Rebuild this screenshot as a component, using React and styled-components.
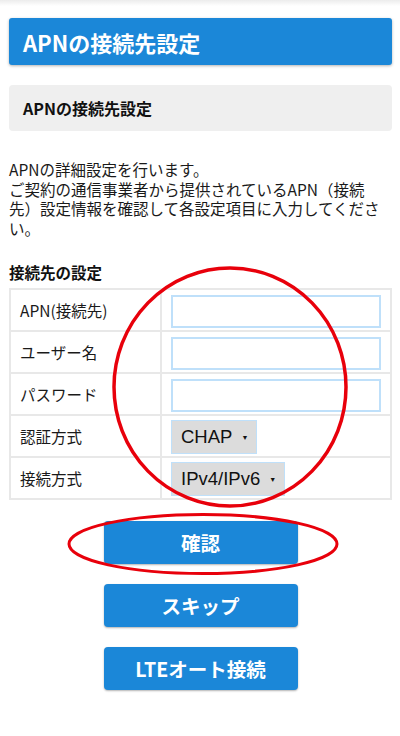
import React from 'react'
import styled, { createGlobalStyle } from 'styled-components'

const GlobalStyle = createGlobalStyle`
  html, body {
    margin: 0;
    padding: 0;
    background: #fff;
  }
  body {
    font-family: "Noto Sans CJK JP", "Noto Sans", sans-serif;
    color: #111;
  }
`

const fields = [
  { label: 'APN(接続先)', type: 'input' },
  { label: 'ユーザー名', type: 'input' },
  { label: 'パスワード', type: 'input' },
  { label: '認証方式', type: 'select', value: 'CHAP' },
  { label: '接続方式', type: 'select', value: 'IPv4/IPv6' },
]

const App = () => {
  return (
    <Page>
      <GlobalStyle />
      <TopShade />
      <Content>
        <Header>APNの接続先設定</Header>
        <SubHeader>APNの接続先設定</SubHeader>
        <Intro>
          <span>APNの詳細設定を行います。</span>
          <span>ご契約の通信事業者から提供されているAPN（接続先）設定情報を確認して各設定項目に入力してください。</span>
        </Intro>
        <SectionTitle>接続先の設定</SectionTitle>
        <Table>
          <tbody>
            {fields.map((f) => (
              <tr key={f.label}>
                <LabelCell>{f.label}</LabelCell>
                <FieldCell>
                  {f.type === 'input' ? (
                    <TextInput type="text" />
                  ) : (
                    <SelectBox>
                      <span>{f.value}</span>
                      <Caret>▼</Caret>
                    </SelectBox>
                  )}
                </FieldCell>
              </tr>
            ))}
          </tbody>
        </Table>
        <Buttons>
          <Button>確認</Button>
          <Button>スキップ</Button>
          <Button>LTEオート接続</Button>
        </Buttons>
      </Content>
      <Marks width="400" height="736" viewBox="0 0 400 736">
        <ellipse cx="230" cy="387" rx="116" ry="119" fill="none" stroke="#e8000b" strokeWidth="3.5" />
        <ellipse cx="203" cy="544" rx="134" ry="29.5" fill="none" stroke="#e8000b" strokeWidth="3" />
      </Marks>
    </Page>
  )
}

const Page = styled.div`
  position: relative;
  width: 400px;
  min-height: 736px;
  overflow: hidden;
`

const TopShade = styled.div`
  height: 6px;
  background: linear-gradient(#ececec, #fff);
`

const Content = styled.div`
  padding: 12px 8px 0 9px;
  display: flex;
  flex-direction: column;
`

const Header = styled.h1`
  margin: 0;
  height: 47px;
  display: flex;
  align-items: center;
  padding: 0 14px;
  background: #1b87d8;
  color: #fff;
  font-size: 22px;
  font-weight: 700;
  border-radius: 3px;
  box-shadow: 0 1px 3px rgba(0, 0, 0, 0.3);
`

const SubHeader = styled.h2`
  margin: 20px 0 0;
  height: 46px;
  display: flex;
  align-items: center;
  padding: 0 14px;
  background: #efefef;
  font-size: 16px;
  font-weight: 700;
  border-radius: 4px;
`

const Intro = styled.p`
  margin: 29px 0 0;
  padding-right: 8px;
  font-size: 15.5px;
  line-height: 19.5px;
  color: #1a1a1a;
  span {
    display: block;
  }
`

const SectionTitle = styled.h3`
  margin: 24px 0 0;
  font-size: 15.5px;
  line-height: 20px;
  font-weight: 700;
`

const Table = styled.table`
  margin-top: 6px;
  width: 100%;
  border-collapse: collapse;
  border: 2px solid #e8e8e8;
  tr {
    height: 42px;
  }
`

const LabelCell = styled.td`
  width: 140px;
  padding: 0 0 0 9px;
  border: 2px solid #e8e8e8;
  font-size: 15.5px;
  color: #1a1a1a;
  white-space: nowrap;
`

const FieldCell = styled.td`
  padding: 4px 9px 2px 9px;
  border: 2px solid #e8e8e8;
`

const TextInput = styled.input`
  display: block;
  box-sizing: border-box;
  width: 100%;
  height: 33px;
  border: 2px solid #bfe0fa;
  background: #fff;
  outline: none;
`

const SelectBox = styled.div`
  display: inline-flex;
  align-items: center;
  box-sizing: border-box;
  height: 34px;
  padding: 0 8px 0 9px;
  gap: 9px;
  background: #dcdcdc;
  border: 1px solid #bfe0fa;
  font-family: "Liberation Sans", Arial, sans-serif;
  font-size: 18.5px;
  color: #111;
`

const Caret = styled.span`
  font-size: 7px;
  line-height: 1;
`

const Buttons = styled.div`
  margin-top: 21px;
  display: flex;
  flex-direction: column;
  align-items: center;
  gap: 20px;
`

const Button = styled.button`
  width: 194px;
  height: 43px;
  border: none;
  border-radius: 4px;
  background: #1b87d8;
  color: #fff;
  font-family: "Noto Sans CJK JP", "Noto Sans", sans-serif;
  font-size: 19.5px;
  font-weight: 700;
  box-shadow: 0 1px 2px rgba(0, 0, 0, 0.3);
`

const Marks = styled.svg`
  position: absolute;
  left: 0;
  top: 0;
  pointer-events: none;
`

export default App
